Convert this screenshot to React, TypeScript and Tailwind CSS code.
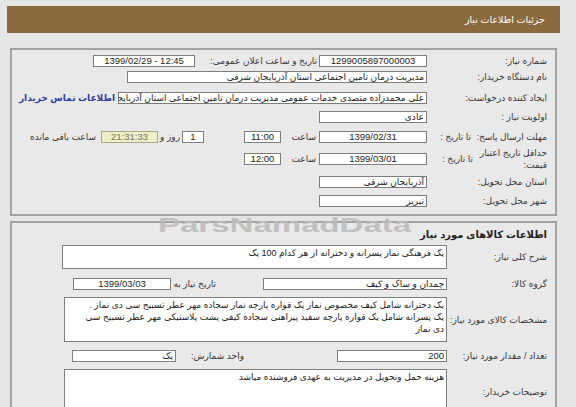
import type { ReactNode } from 'react'

const font = { fontFamily: '"Liberation Sans", "DejaVu Sans", sans-serif' }

function Box({ w, children, align = 'right', className = '' }: { w: string; children?: ReactNode; align?: 'right' | 'center'; className?: string }) {
  return (
    <div
      className={`${w} h-[12px] shrink-0 bg-white border border-[#7d7d7d] flex items-center overflow-hidden whitespace-nowrap px-[2px] text-[#222] ${
        align === 'center' ? 'justify-center text-[9.5px]' : 'justify-start'
      } ${className}`}
    >
      {children}
    </div>
  )
}

function Area({ w, h, children, className = '' }: { w: string; h: string; children?: ReactNode; className?: string }) {
  return (
    <div className={`${w} ${h} shrink-0 bg-white border border-[#7d7d7d] px-[2px] pt-[1px] leading-[12px] text-[#222] overflow-hidden ${className}`}>
      {children}
    </div>
  )
}

function Label({ w, children }: { w: string; children: ReactNode }) {
  return <div className={`${w} shrink-0 text-[#383838]`}>{children}</div>
}

export default function App() {
  return (
    <div dir="rtl" style={font} className="relative w-[576px] h-[407px] overflow-hidden bg-[#e6e6e6] pl-[7px] pr-[16px] pt-[6px] text-[9px] leading-[12px]">
      {/* header */}
      <div className="h-[27px] bg-[#8c6a3f] flex items-center pr-[15px] text-white text-[9.5px]">
        جزئیات اطلاعات نیاز
      </div>

      {/* panel 1 */}
      <div className="mx-[3px] mt-[15px] h-[168px] border-2 border-[#a2a2a2] bg-[#e9e9e9] pr-[8px] pt-[5px]">
        <div className="flex items-center h-[12px]">
          <Label w="w-[120px]">شماره نیاز:</Label>
          <Box w="w-[108px]" align="center">1299005897000003</Box>
          <div className="w-[124px] shrink-0 pr-[2px] text-[#383838]">تاریخ و ساعت اعلان عمومی:</div>
          <Box w="w-[102px]" align="center"><span dir="ltr">1399/02/29 - 12:45</span></Box>
        </div>

        <div className="flex items-center h-[12px] mt-[4px]">
          <Label w="w-[120px]">نام دستگاه خریدار:</Label>
          <Box w="w-[300px]">مدیریت درمان تامین اجتماعی استان آذربایجان شرقی</Box>
        </div>

        <div className="flex items-center h-[12px] mt-[9px]">
          <Label w="w-[120px]">ایجاد کننده درخواست:</Label>
          <Box w="w-[309px]">علی محمدزاده متصدی خدمات عمومی مدیریت درمان تامین اجتماعی استان آذربایجان شرقی</Box>
          <span className="mr-[3px] whitespace-nowrap font-bold text-[#2e3d9e]">اطلاعات تماس خریدار</span>
        </div>

        <div className="flex items-center h-[12px] mt-[7px]">
          <Label w="w-[120px]">اولویت نیاز :</Label>
          <Box w="w-[108px]">عادی</Box>
        </div>

        <div className="flex items-center h-[12px] mt-[8px]">
          <div className="w-[120px] shrink-0 flex text-[#383838] whitespace-nowrap">
            <span className="w-[76px]">مهلت ارسال پاسخ:</span>
            <span>تا تاریخ :</span>
          </div>
          <Box w="w-[108px]" align="center">1399/02/31</Box>
          <span className="w-[38px] shrink-0 pr-[3px] text-[#383838]">ساعت</span>
          <Box w="w-[37px]" align="center">11:00</Box>
          <Box w="w-[22px]" align="center" className="mr-[40px]">1</Box>
          <span className="w-[24px] shrink-0 pr-[2px] text-[#383838] whitespace-nowrap">روز و</span>
          <div className="w-[57px] h-[12px] shrink-0 bg-[#eeeec9] border border-[#a9a98a] flex items-center justify-center text-[9.5px] text-[#77775a]">21:31:33</div>
          <span className="mr-[5px] whitespace-nowrap text-[#383838]">ساعت باقی مانده</span>
        </div>

        <div className="flex items-center h-[26px] mt-[3px]">
          <div className="w-[120px] shrink-0 flex items-center text-[#383838]">
            <span className="w-[74px] leading-[12px]">حداقل تاریخ اعتبار قیمت:</span>
            <span className="whitespace-nowrap">تا تاریخ :</span>
          </div>
          <Box w="w-[108px]" align="center">1399/03/01</Box>
          <span className="w-[38px] shrink-0 pr-[3px] text-[#383838]">ساعت</span>
          <Box w="w-[37px]" align="center">12:00</Box>
        </div>

        <div className="flex items-center h-[12px] mt-[4px]">
          <Label w="w-[120px]">استان محل تحویل:</Label>
          <Box w="w-[108px]">آذربایجان شرقی</Box>
        </div>

        <div className="flex items-center h-[12px] mt-[7px]">
          <Label w="w-[120px]">شهر محل تحویل:</Label>
          <Box w="w-[108px]">تبریز</Box>
        </div>
      </div>

      {/* panel 2 */}
      <div className="mx-[3px] mt-[5px] h-[200px] border-2 border-[#a2a2a2] bg-[#e9e9e9] pr-[8px] pt-[6px]">
        <div className="h-[12px] font-bold text-[#222] text-[10px]">اطلاعات کالاهای مورد نیاز</div>

        <div className="flex items-center mt-[4px]">
          <Label w="w-[100px]">شرح کلی نیاز:</Label>
          <Area w="w-[385px]" h="h-[24px]">یک فرهنگی نماز پسرانه و دخترانه از هر کدام 100 یک</Area>
        </div>

        <div className="flex items-center h-[12px] mt-[9px]">
          <Label w="w-[100px]">گروه کالا:</Label>
          <Box w="w-[184px]">چمدان و ساک و کیف</Box>
          <span className="w-[92px] shrink-0 pr-[47px] whitespace-nowrap text-[#383838]">تاریخ نیاز به کالا:</span>
          <Box w="w-[98px]" align="center">1399/03/03</Box>
        </div>

        <div className="flex items-center mt-[7px]">
          <Label w="w-[100px]">مشخصات کالای مورد نیاز:</Label>
          <Area w="w-[383px]" h="h-[45px]" className="pl-[8px]">
            یک دخترانه شامل کیف مخصوص نماز یک قواره پارچه نماز سجاده مهر عطر تسبیح سی دی نماز .&nbsp;&nbsp; یک پسرانه شامل یک قواره پارچه سفید پیراهنی سجاده کیفی پشت پلاستیکی مهر عطر تسبیح سی دی نماز
          </Area>
        </div>

        <div className="flex items-center h-[12px] mt-[8px]">
          <Label w="w-[100px]">تعداد / مقدار مورد نیاز:</Label>
          <Box w="w-[110px]" className="text-[9.5px]">200</Box>
          <span className="w-[161px] shrink-0 pr-[93px] whitespace-nowrap text-[#383838]">واحد شمارش:</span>
          <Box w="w-[104px]">یک</Box>
        </div>

        <div className="flex items-center mt-[7px]">
          <Label w="w-[100px]">توضیحات خریدار:</Label>
          <Area w="w-[383px]" h="h-[46px]">هزینه حمل ونحویل در مدیریت به عهدی فروشنده میاشد</Area>
        </div>
      </div>

      {/* watermark */}
      <div
        dir="ltr"
        className="pointer-events-none absolute left-[158px] top-[215px] origin-left scale-x-[1.65] text-[20px] leading-none font-bold text-[#bcbcbc] opacity-90"
        style={{ fontFamily: '"Liberation Sans", Arial, sans-serif' }}
      >
        ParsNamadData
      </div>
    </div>
  )
}
